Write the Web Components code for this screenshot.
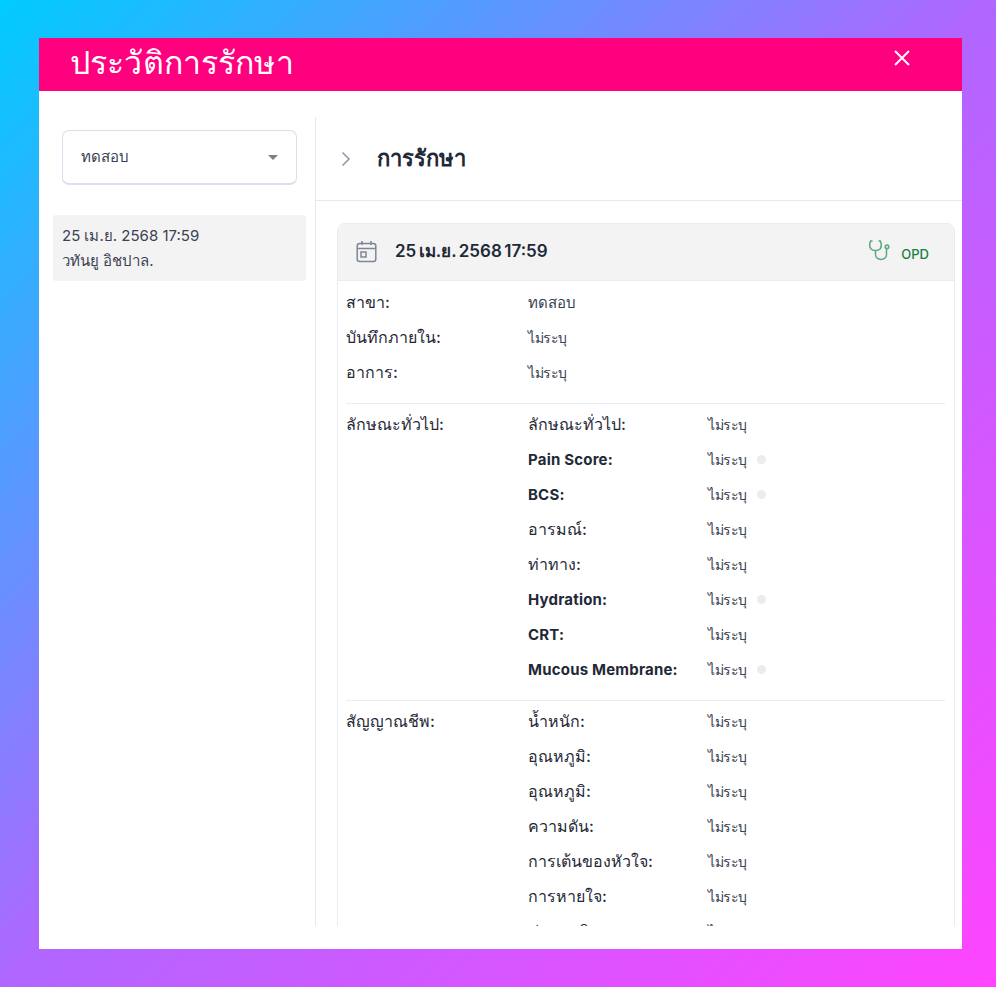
<!DOCTYPE html>
<html lang="th">
<head>
<meta charset="utf-8">
<title>ประวัติการรักษา</title>
<style>
  html, body { margin: 0; height: 100%; }
  body {
    width: 996px; height: 987px; overflow: hidden;
    background: linear-gradient(135deg, #00ccff 0%, #b066ff 50%, #ff44ff 100%);
    font-family: "Inter", "Liberation Sans", sans-serif;
    color: #1f2937;
  }
</style>
</head>
<body>
<history-modal heading="ประวัติการรักษา">
  <history-sidebar slot="side" branch="ทดสอบ" date="25 เม.ย. 2568 17:59" person="วทันยู อิชปาล."></history-sidebar>
  <treatment-panel slot="main" heading="การรักษา">
    <treatment-card date="25 เม.ย. 2568 17:59" kind="OPD">
      <info-section>
        <info-row label="สาขา:" value="ทดสอบ" wide></info-row>
        <info-row label="บันทึกภายใน:" value="ไม่ระบุ"></info-row>
        <info-row label="อาการ:" value="ไม่ระบุ"></info-row>
      </info-section>
      <info-section heading="ลักษณะทั่วไป:">
        <info-row nested label="ลักษณะทั่วไป:" value="ไม่ระบุ"></info-row>
        <info-row nested label="Pain Score:" value="ไม่ระบุ" dot></info-row>
        <info-row nested label="BCS:" value="ไม่ระบุ" dot></info-row>
        <info-row nested label="อารมณ์:" value="ไม่ระบุ"></info-row>
        <info-row nested label="ท่าทาง:" value="ไม่ระบุ"></info-row>
        <info-row nested label="Hydration:" value="ไม่ระบุ" dot></info-row>
        <info-row nested label="CRT:" value="ไม่ระบุ"></info-row>
        <info-row nested label="Mucous Membrane:" value="ไม่ระบุ" dot></info-row>
      </info-section>
      <info-section heading="สัญญาณชีพ:">
        <info-row nested label="น้ำหนัก:" value="ไม่ระบุ"></info-row>
        <info-row nested label="อุณหภูมิ:" value="ไม่ระบุ"></info-row>
        <info-row nested label="อุณหภูมิ:" value="ไม่ระบุ"></info-row>
        <info-row nested label="ความดัน:" value="ไม่ระบุ"></info-row>
        <info-row nested label="การเต้นของหัวใจ:" value="ไม่ระบุ"></info-row>
        <info-row nested label="การหายใจ:" value="ไม่ระบุ"></info-row>
        <info-row nested label="ค่าออกซิเจน:" value="ไม่ระบุ"></info-row>
      </info-section>
    </treatment-card>
  </treatment-panel>
</history-modal>

<script>
class HistoryModal extends HTMLElement {
  constructor() {
    super()
    this.attachShadow({ mode: 'open' })
    this.shadowRoot.innerHTML = `
      <style>
      :host { display: block; box-sizing: border-box; width: 923px; height: 911px; margin: 38px 0 0 39px; background: #fff; }
      header { height: 53px; background: #ff007f; color: #fff; display: flex; align-items: center; justify-content: space-between; padding: 0 50px 0 31px; }
      h1 { margin: 0 0 3px; font-size: 32px; font-weight: 400; line-height: 50px; letter-spacing: .15px; }
      svg { display: block; margin-bottom: 14px; }
      .body { display: flex; height: 809px; margin-top: 26px; overflow: hidden; }
      </style>
      <header>
        <h1></h1>
        <svg width="20" height="20" viewBox="0 0 20 20" fill="none" stroke="#fff" stroke-width="2"><path d="M3 3l14 14M17 3L3 17"/></svg>
      </header>
      <div class="body"><slot name="side"></slot><slot name="main"></slot></div>
    `
  }
  connectedCallback() {
    this.shadowRoot.querySelector('h1').textContent = this.getAttribute('heading')
  }
}

class HistorySidebar extends HTMLElement {
  constructor() {
    super()
    this.attachShadow({ mode: 'open' })
    this.shadowRoot.innerHTML = `
      <style>
      :host { display: block; box-sizing: border-box; width: 277px; height: 100%; border-right: 1px solid #e5e9f0; padding: 13px 9px 0 14px; flex: none; }
      .select { box-sizing: border-box; width: 235px; height: 55px; margin-left: 9px; border: 1px solid #d9e0ec; border-bottom-width: 2px; border-radius: 7px; display: flex; align-items: center; justify-content: space-between; padding: 0 18px; font-size: 15px; color: #374151; }
      .caret { width: 0; height: 0; border: 5px solid transparent; border-top: 5px solid #7b7f87; border-bottom: 0; }
      .item { margin-top: 30px; height: 66px; box-sizing: border-box; padding: 9px 9px; background: #f3f3f4; border-radius: 3px; font-size: 15px; line-height: 24.5px; color: #3b4250; }
      </style>
      <div class="select"><span class="branch"></span><span class="caret"></span></div>
      <div class="item"><div class="date"></div><div class="person"></div></div>
    `
  }
  connectedCallback() {
    this.shadowRoot.querySelector('.branch').textContent = this.getAttribute('branch')
    this.shadowRoot.querySelector('.date').textContent = this.getAttribute('date')
    this.shadowRoot.querySelector('.person').textContent = this.getAttribute('person')
  }
}

class TreatmentPanel extends HTMLElement {
  constructor() {
    super()
    this.attachShadow({ mode: 'open' })
    this.shadowRoot.innerHTML = `
      <style>
      :host { display: block; flex: 1; min-width: 0; }
      .title { height: 84px; box-sizing: border-box; border-bottom: 1px solid #e5e9f0; display: flex; align-items: center; padding: 0 0 0 25px; gap: 26px; }
      h2 { margin: 0; font-size: 22px; font-weight: 600; color: #1f2937; }
      svg { display: block; }
      .content { padding: 22px 7px 0 21px; }
      </style>
      <div class="title">
        <svg width="10" height="16" viewBox="0 0 10 16" fill="none" stroke="#8b95a5" stroke-width="1.5"><path d="M1.5 1.5L8 8l-6.5 6.5"/></svg>
        <h2></h2>
      </div>
      <div class="content"><slot></slot></div>
    `
  }
  connectedCallback() {
    this.shadowRoot.querySelector('h2').textContent = this.getAttribute('heading')
  }
}

class TreatmentCard extends HTMLElement {
  constructor() {
    super()
    this.attachShadow({ mode: 'open' })
    this.shadowRoot.innerHTML = `
      <style>
      :host { display: block; box-sizing: border-box; border: 1px solid #e8ebf1; border-radius: 8px; }
      .head { height: 57px; box-sizing: border-box; background: #f3f3f4; border-bottom: 1px solid #e8ebf1; border-radius: 8px 8px 0 0; display: flex; align-items: center; padding: 0 25px 0 18px; }
      .head > svg { margin-bottom: 2px; }
      .date { margin: 0 0 3px 18px; font-size: 17px; font-weight: 600; color: #1f2937; word-spacing: -1.8px; }
      .kind { margin-left: auto; display: flex; align-items: center; gap: 10px; color: #15803d; font-size: 13px; font-weight: 500; }
      .kind svg { margin-bottom: 2px; }
      .kind span { margin-top: 4px; }
      svg { display: block; }
      .rows { padding: 4px 9px 0 8px; }
      </style>
      <div class="head">
        <svg width="21" height="23" viewBox="0 0 21 23" fill="none" stroke="#7d8797" stroke-width="1.5"><rect x="1.2" y="3.500" width="18.6" height="18" rx="2.500"/><path d="M1.200 8.500h18.6M6 1v4M15 1v4"/><rect x="5" y="12" width="5" height="5"/></svg>
        <div class="date"></div>
        <div class="kind">
          <svg width="22" height="22" viewBox="0 0 22 22" fill="none" stroke="#5aa97a" stroke-width="1.5"><path d="M3.500 1H1.600C.4 4 .4 7 2 9c2 2 7 2 9 0 1.600-2 1.600-5 .4-8H9.500"/><path d="M6.500 10.500v4c0 6.500 11 6.500 11 0V9"/><circle cx="18" cy="6.800" r="1.800"/></svg>
          <span></span>
        </div>
      </div>
      <div class="rows"><slot></slot></div>
    `
  }
  connectedCallback() {
    this.shadowRoot.querySelector('.date').textContent = this.getAttribute('date')
    this.shadowRoot.querySelector('.kind span').textContent = this.getAttribute('kind')
  }
}

class InfoSection extends HTMLElement {
  constructor() {
    super()
    this.attachShadow({ mode: 'open' })
    this.shadowRoot.innerHTML = `
      <style>
      :host { display: flex; align-items: flex-start; border-bottom: 1px solid #e9ecf2; padding: 0 0 13px; margin-bottom: 3px; font-size: 16px; }
      :host(:last-child) { border-bottom: 0; }
      .heading { flex: none; width: 182px; line-height: 35px; font-weight: 500; color: #1f2937; }
      .heading:empty { display: none; }
      .list { flex: 1; }
      </style>
      <div class="heading"></div>
      <div class="list"><slot></slot></div>
    `
  }
  connectedCallback() {
    this.shadowRoot.querySelector('.heading').textContent = this.getAttribute('heading') || ''
  }
}

class InfoRow extends HTMLElement {
  constructor() {
    super()
    this.attachShadow({ mode: 'open' })
    this.shadowRoot.innerHTML = `
      <style>
      :host { display: flex; align-items: center; height: 35px; font-size: 14px; }
      .label { flex: none; width: 182px; font-size: 16px; font-weight: 500; color: #1f2937; }
      .label.latin { font-size: 15px; font-weight: 700; letter-spacing: .2px; }
      :host([nested]) .label { width: 180px; }
      .value { font-weight: 400; color: #374151; letter-spacing: -.5px; }
      :host([wide]) .value { font-size: 15px; letter-spacing: 0; }
      .dot { width: 9px; height: 9px; border-radius: 50%; background: #ececee; margin-left: 10px; display: none; }
      :host([dot]) .dot { display: block; }
      </style>
      <div class="label"></div>
      <div class="value"></div>
      <div class="dot"></div>
    `
  }
  connectedCallback() {
    let label = this.getAttribute('label')
    let labelEl = this.shadowRoot.querySelector('.label')
    labelEl.textContent = label
    if (/^[A-Za-z]/.test(label)) { labelEl.classList.add('latin') }
    this.shadowRoot.querySelector('.value').textContent = this.getAttribute('value')
  }
}

customElements.define('history-modal', HistoryModal)
customElements.define('history-sidebar', HistorySidebar)
customElements.define('treatment-panel', TreatmentPanel)
customElements.define('treatment-card', TreatmentCard)
customElements.define('info-section', InfoSection)
customElements.define('info-row', InfoRow)
</script>
</body>
</html>
